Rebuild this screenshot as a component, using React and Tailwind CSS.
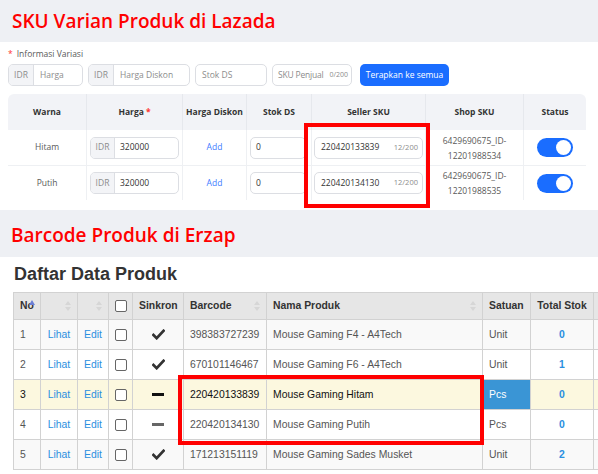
import React from "react";

const lz = { fontFamily: '"Open Sans", "Noto Sans", sans-serif' };
const ar = { fontFamily: '"Liberation Sans", Arial, sans-serif' };

function Toggle() {
  return (
    <div className="w-[36px] h-[19px] rounded-full bg-[#1a6dff] relative mx-auto">
      <div className="absolute right-[2px] top-[2px] w-[15px] h-[15px] rounded-full bg-white" />
    </div>
  );
}

function Check() {
  return (
    <svg width="13" height="11" viewBox="0 0 14 12" className="mx-auto">
      <path d="M1.5 6.5 L5 10 L12.5 2" fill="none" stroke="#333" strokeWidth="3" strokeLinecap="square" />
    </svg>
  );
}

function Dash({ dark }) {
  return <div className={`mx-auto w-[12px] h-[3px] ${dark ? "bg-[#111]" : "bg-[#666]"}`} />;
}

function Box() {
  return <div className="mx-auto w-[12px] h-[12px] rounded-[2px] border border-[#666] bg-white" />;
}

function Sort() {
  return (
    <svg width="6" height="12" viewBox="0 0 6 12" className="inline-block">
      <path d="M3 1 L6 5 L0 5 Z" fill="#d6d6d6" />
      <path d="M3 11 L6 7 L0 7 Z" fill="#d6d6d6" />
    </svg>
  );
}

const lazRows = [
  { warna: "Hitam", sku: "220420133839", shop: "12201988534" },
  { warna: "Putih", sku: "220420134130", shop: "12201988535" },
];

const erzRows = [
  { no: 1, sync: "check", bc: "398383727239", nama: "Mouse Gaming F4 - A4Tech", sat: "Unit", stok: 0, bg: "bg-[#f9f9f9]" },
  { no: 2, sync: "check", bc: "670101146467", nama: "Mouse Gaming F6 - A4Tech", sat: "Unit", stok: 1, bg: "bg-white" },
  { no: 3, sync: "dash-dark", bc: "220420133839", nama: "Mouse Gaming Hitam", sat: "Pcs", stok: 0, bg: "bg-[#fcf8df]", hl: true },
  { no: 4, sync: "dash", bc: "220420134130", nama: "Mouse Gaming Putih", sat: "Pcs", stok: 0, bg: "bg-white" },
  { no: 5, sync: "check", bc: "171213151119", nama: "Mouse Gaming Sades Musket", sat: "Unit", stok: 2, bg: "bg-[#f9f9f9]" },
];

export default function App() {
  const td = "border border-[#d2d2d2] px-[6px] whitespace-nowrap";
  return (
    <div className="w-[598px] h-[474px] overflow-hidden bg-[#eef0f4]">
      {/* Lazada */}
      <div className="h-[42px] px-[12px] flex items-center" style={lz}>
        <span className="text-[19px] font-semibold text-[#ff0000]">SKU Varian Produk di Lazada</span>
      </div>
      <div className="h-[168px] bg-white px-[8px] pt-[4px] whitespace-nowrap" style={lz}>
        <div className="h-[16px] flex items-center text-[8.5px] text-[#595959]">
          <span className="text-[#ff3333] mr-[4px]">*</span>Informasi Variasi
        </div>
        <div className="mt-[2px] flex h-[22px] text-[8.5px] text-[#8c8c8c]">
          <div className="w-[75px] flex border border-[#dcdee3] rounded-[5px] overflow-hidden">
            <div className="w-[25px] bg-[#f3f4f7] border-r border-[#dcdee3] flex items-center justify-center">IDR</div>
            <div className="flex items-center pl-[6px]">Harga</div>
          </div>
          <div className="ml-[5px] w-[102px] flex border border-[#dcdee3] rounded-[5px] overflow-hidden">
            <div className="w-[25px] bg-[#f3f4f7] border-r border-[#dcdee3] flex items-center justify-center">IDR</div>
            <div className="flex items-center pl-[6px]">Harga Diskon</div>
          </div>
          <div className="ml-[5px] w-[72px] flex items-center pl-[6px] border border-[#dcdee3] rounded-[5px]">Stok DS</div>
          <div className="ml-[5px] w-[80px] flex items-center justify-between pl-[5px] pr-[3px] border border-[#dcdee3] rounded-[5px]">
            <span className="tracking-[-0.2px]">SKU Penjual</span>
            <span className="text-[7px]">0/200</span>
          </div>
          <div className="ml-[8px] w-[89px] rounded-[5px] bg-[#1a6dff] text-white flex items-center justify-center">Terapkan ke semua</div>
        </div>

        <div className="relative mt-[8px] w-[578px]">
          <div className="grid grid-cols-[78px_96px_64px_65px_114px_98px_63px] text-[8.5px] text-[#333]">
            {["Warna", "Harga", "Harga Diskon", "Stok DS", "Seller SKU", "Shop SKU", "Status"].map((h, i) => (
              <div
                key={h}
                className={`h-[36px] bg-[#f2f3f7] flex items-center justify-center font-bold ${i > 0 ? "border-l border-[#e6e8ed]" : "rounded-tl-[6px]"} ${i === 6 ? "rounded-tr-[6px]" : ""}`}
              >
                {h}
                {h === "Harga" && <span className="text-[#ff3333] ml-[2px]">*</span>}
              </div>
            ))}
            {lazRows.map((r, ri) => (
              <React.Fragment key={r.warna}>
                <div className={`h-[35px] flex items-center justify-center text-[#595959] border-[#eef0f3] ${ri ? "border-t" : ""}`}>{r.warna}</div>
                <div className={`h-[35px] flex items-center px-[3px] border-l border-[#eef0f3] ${ri ? "border-t" : ""}`}>
                  <div className="w-[90px] h-[22px] flex border border-[#dcdee3] rounded-[5px] overflow-hidden">
                    <div className="w-[24px] bg-[#f3f4f7] border-r border-[#dcdee3] flex items-center justify-center text-[#8c8c8c]">IDR</div>
                    <div className="flex items-center pl-[5px] text-[#333]">320000</div>
                  </div>
                </div>
                <div className={`h-[35px] flex items-center justify-center text-[#3d7bff] border-l border-[#eef0f3] ${ri ? "border-t" : ""}`}>Add</div>
                <div className={`h-[35px] flex items-center px-[3px] border-l border-[#eef0f3] ${ri ? "border-t" : ""}`}>
                  <div className="w-[56px] h-[22px] flex items-center pl-[5px] border border-[#dcdee3] rounded-[5px] text-[#333]">0</div>
                </div>
                <div className={`h-[35px] flex items-center px-[2px] border-l border-[#eef0f3] ${ri ? "border-t" : ""}`}>
                  <div className="w-[110px] h-[22px] flex items-center justify-between pl-[6px] pr-[4px] border border-[#dcdee3] rounded-[5px]">
                    <span className="text-[#333]">{r.sku}</span>
                    <span className="text-[7.5px] text-[#8c8c8c]">12/200</span>
                  </div>
                </div>
                <div className={`h-[35px] flex flex-col items-center justify-center leading-[15px] text-[#595959] border-l border-[#eef0f3] ${ri ? "border-t" : ""}`}>
                  <span>6429690675_ID-</span>
                  <span>{r.shop}</span>
                </div>
                <div className={`h-[35px] flex items-center border-l border-[#eef0f3] ${ri ? "border-t" : ""}`}>
                  <Toggle />
                </div>
              </React.Fragment>
            ))}
          </div>
          <div className="absolute left-[296px] top-[29px] w-[126px] h-[85px] border-4 border-[#ff0000]" />
        </div>
      </div>

      {/* Erzap */}
      <div className="h-[47px] px-[11px] pt-[4px] flex items-center" style={lz}>
        <span className="text-[19px] font-semibold text-[#ff0000]">Barcode Produk di Erzap</span>
      </div>
      <div className="h-[217px] bg-white" style={ar}>
        <div className="h-[35px] px-[14px] flex items-center text-[18px] font-bold text-[#333]">Daftar Data Produk</div>
        <div className="relative ml-[13px]">
          <table className="table-fixed border-collapse w-[620px] text-[10.4px] text-[#555]">
            <colgroup>
              <col className="w-[27px]" />
              <col className="w-[37px]" />
              <col className="w-[31px]" />
              <col className="w-[24px]" />
              <col className="w-[51px]" />
              <col className="w-[83px]" />
              <col className="w-[216px]" />
              <col className="w-[48px]" />
              <col className="w-[63px]" />
              <col className="w-[40px]" />
            </colgroup>
            <thead>
              <tr className="h-[27px] bg-[#e6e6e6] text-[#333] font-bold">
                <th className={`${td} text-left`}>
                  <span className="relative">
                    No
                    <svg width="6" height="6" viewBox="0 0 6 6" className="absolute right-[-1px] top-[0px]">
                      <path d="M3 0 L6 5 L0 5 Z" fill="#6b7fd6" />
                    </svg>
                  </span>
                </th>
                <th className={`${td} text-right`}><Sort /></th>
                <th className={`${td} text-right`}><Sort /></th>
                <th className={td}><Box /></th>
                <th className={`${td} text-center`}>Sinkron</th>
                <th className={`${td} text-left`}>
                  <div className="flex items-center justify-between"><span>Barcode</span><Sort /></div>
                </th>
                <th className={`${td} text-left`}>
                  <div className="flex items-center justify-between"><span>Nama Produk</span><Sort /></div>
                </th>
                <th className={`${td} text-left px-[4px]`}>Satuan</th>
                <th className={`${td} text-center`}>Total Stok</th>
                <th className={td}></th>
              </tr>
            </thead>
            <tbody>
              {erzRows.map((r) => (
                <tr key={r.no} className={`h-[30px] ${r.bg} ${r.hl ? "text-[#111]" : ""}`}>
                  <td className={td}>{r.no}</td>
                  <td className={`${td} text-center text-[#2a8fe0]`}>Lihat</td>
                  <td className={`${td} text-center text-[#2a8fe0]`}>Edit</td>
                  <td className={td}><Box /></td>
                  <td className={td}>
                    {r.sync === "check" ? <Check /> : <Dash dark={r.sync === "dash-dark"} />}
                  </td>
                  <td className={td}>{r.bc}</td>
                  <td className={td}>{r.nama}</td>
                  <td className={`${td} px-[4px] ${r.hl ? "bg-[#3a95d5] text-white" : ""}`}>{r.sat}</td>
                  <td className={`${td} text-center font-bold text-[#2a8fe0]`}>{r.stok}</td>
                  <td className={td}></td>
                </tr>
              ))}
            </tbody>
          </table>
          <div className="absolute left-[165px] top-[83px] w-[306px] h-[70px] border-4 border-[#ff0000]" />
        </div>
      </div>
    </div>
  );
}
